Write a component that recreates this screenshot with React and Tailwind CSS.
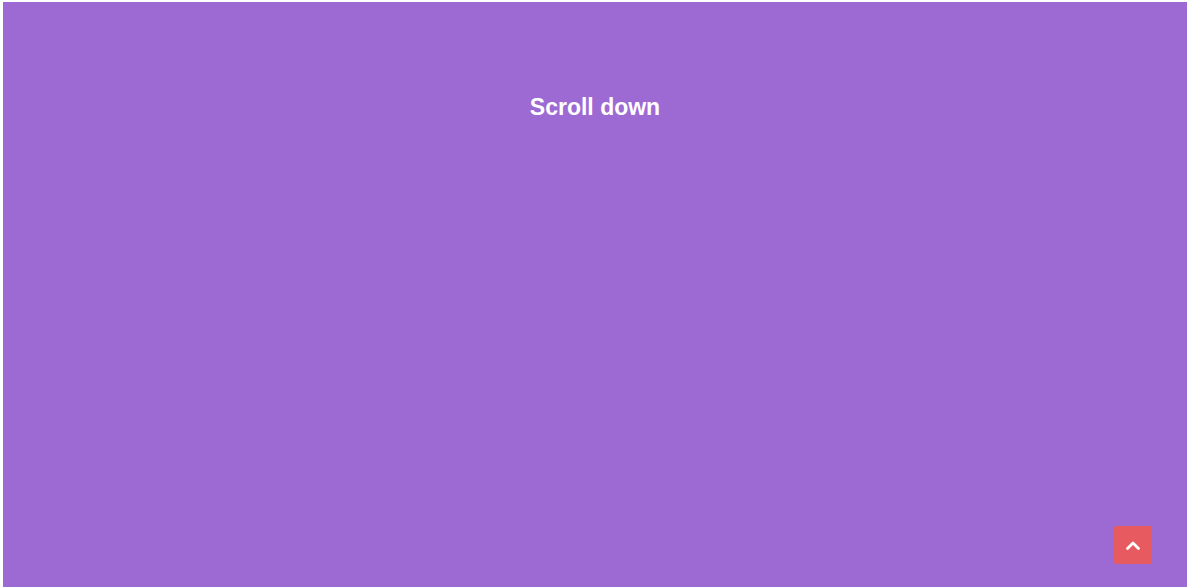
export default function App() {
  return (
    <div className="h-[587px] bg-white pl-[3px] pt-[2px] overflow-hidden">
      <div
        className="relative h-full bg-[#9d6ad4] text-white"
        style={{ fontFamily: '"Liberation Sans", Arial, sans-serif' }}
      >
        <h1 className="pt-[89px] text-center text-[23px] leading-8 font-bold">Scroll down</h1>
        <button className="absolute right-[35px] bottom-[23px] flex h-[38px] w-[38px] items-center justify-center rounded-[2px] bg-[#e65a60]">
          <svg width="16" height="11" viewBox="0 0 16 11" fill="none">
            <path d="M2.5 8.5 L8 3 L13.5 8.5" stroke="white" strokeWidth="2.8" strokeLinecap="round" strokeLinejoin="round" />
          </svg>
        </button>
      </div>
    </div>
  );
}
